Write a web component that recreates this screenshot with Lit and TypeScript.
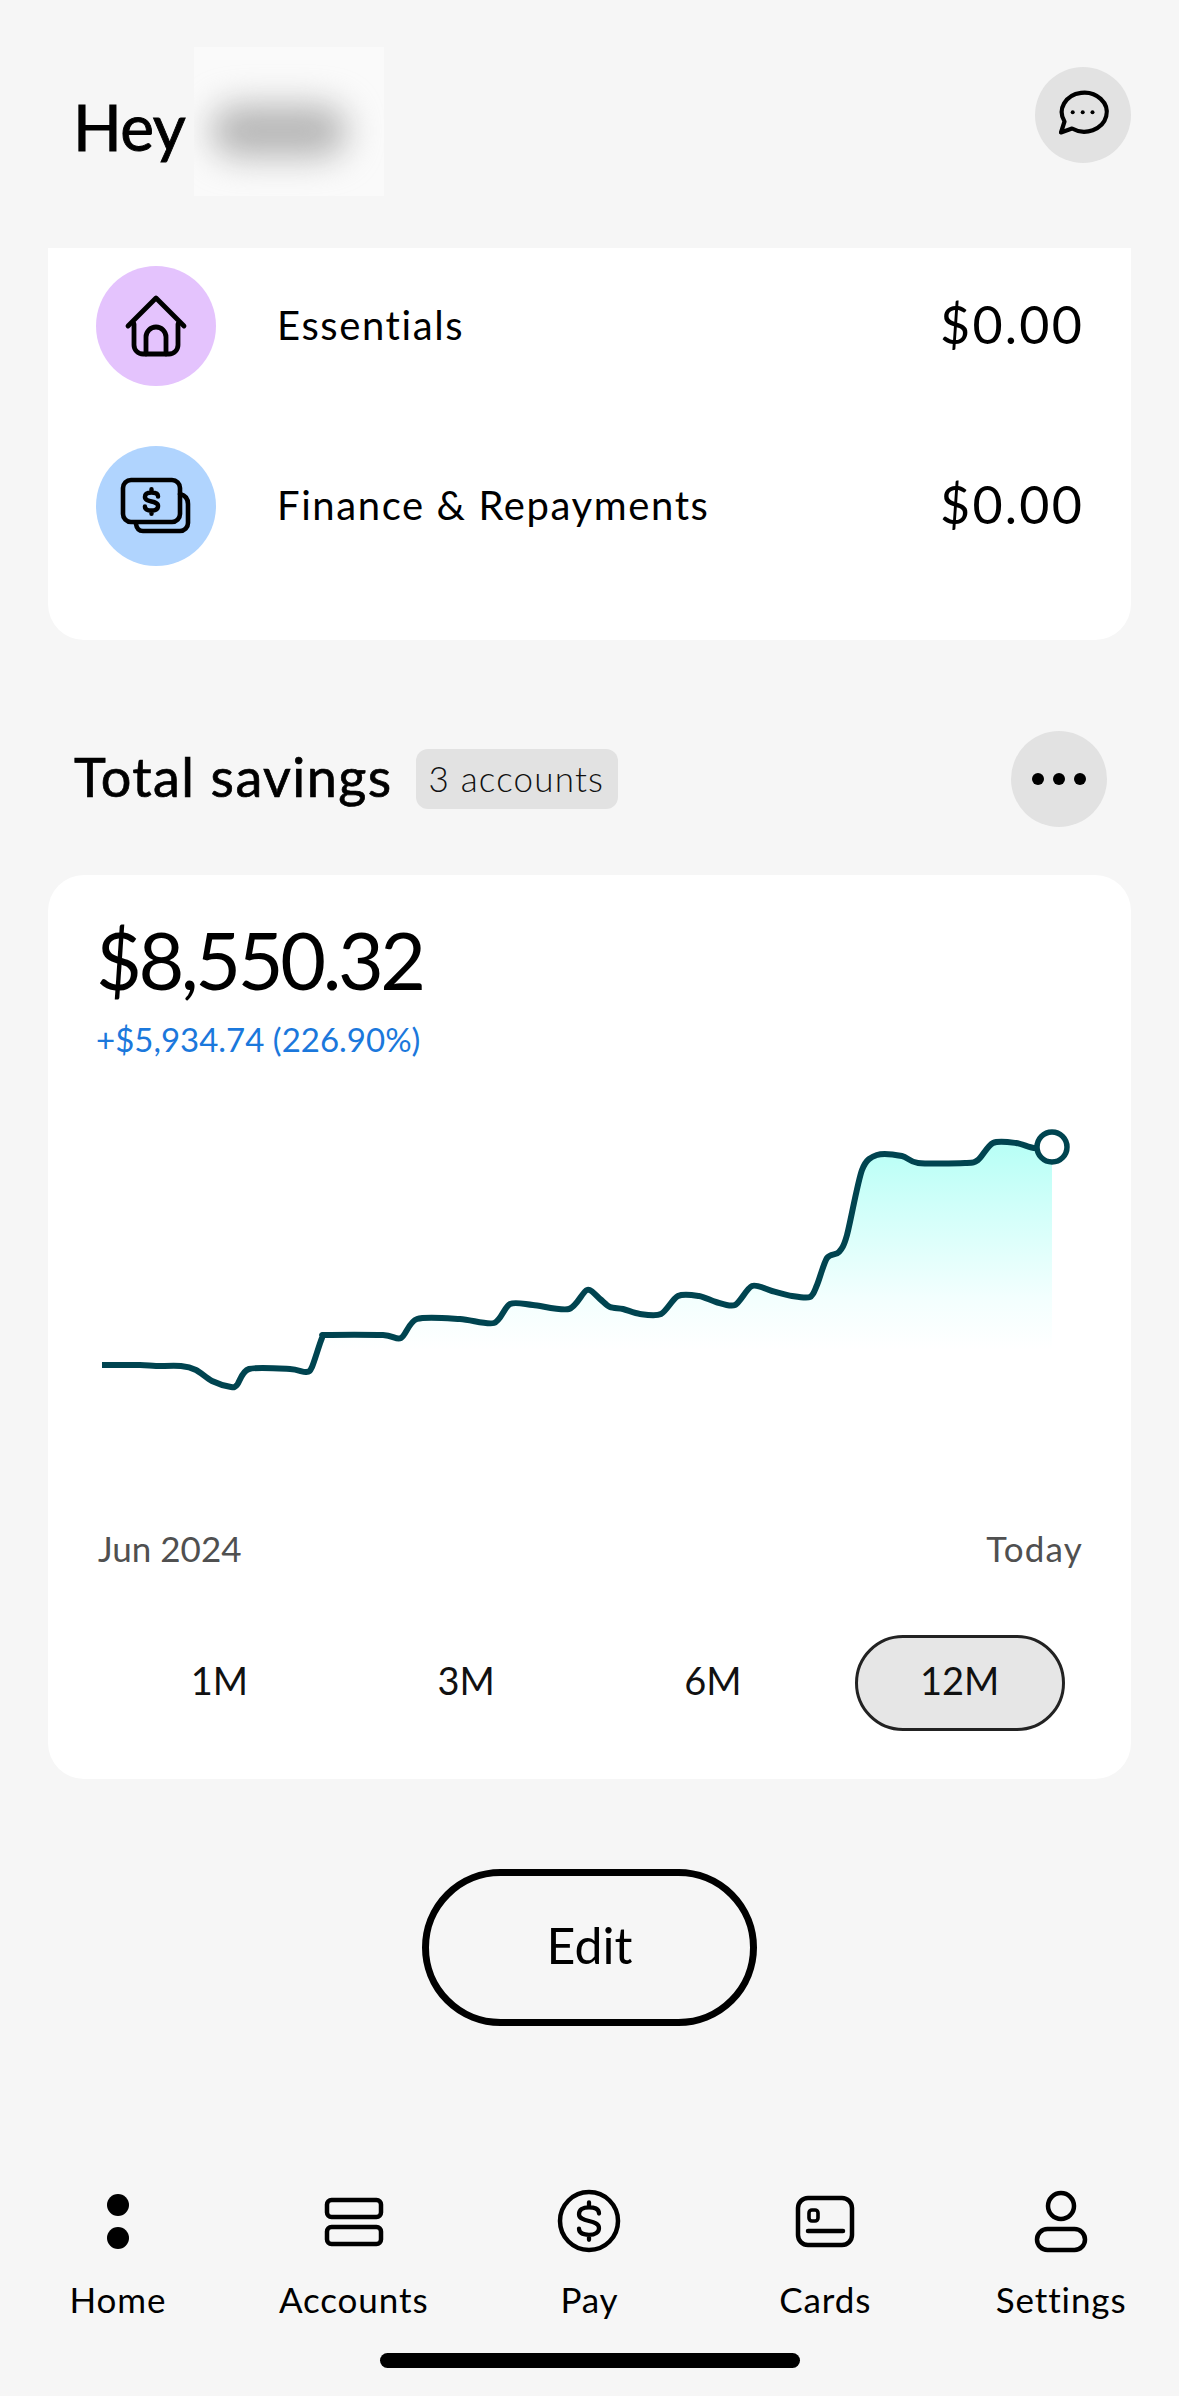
import { LitElement, html, css, svg } from "lit";
import { customElement } from "lit/decorators.js";

const PTS: [number, number][] = [
  [102,1365],[140,1365],[156,1366],[181,1366],[196,1370],[212,1381],[231,1387],[237,1385],[249,1369],[290,1369],[306,1372],[312,1367],[322,1338],[327,1335],[383,1335],[401,1338],[417,1319],[460,1319],[494,1323],[510,1304],[533,1305],[569,1309],[587,1290],[600,1299],[610,1307],[623,1309],[640,1314],[661,1314],[678,1296],[699,1296],[716,1302],[735,1305],[752,1286],[772,1291],[792,1296],[810,1297],[817,1285],[827,1258],[839,1252],[847,1235],[862,1170],[877,1155],[902,1156],[918,1163],[965,1163],[978,1160],[993,1143],[1016,1143],[1034,1148],[1052,1147],
];

function smooth(p: [number, number][]): string {
  let d = `M${p[0][0]} ${p[0][1]}`;
  for (let i = 0; i < p.length - 1; i++) {
    const a = p[Math.max(0, i - 1)], b = p[i], c = p[i + 1], e = p[Math.min(p.length - 1, i + 2)];
    const k = 0.14;
    d += ` C${(b[0] + (c[0] - a[0]) * k).toFixed(1)} ${(b[1] + (c[1] - a[1]) * k).toFixed(1)} ${(c[0] - (e[0] - b[0]) * k).toFixed(1)} ${(c[1] - (e[1] - b[1]) * k).toFixed(1)} ${c[0]} ${c[1]}`;
  }
  return d;
}
const LINE = smooth(PTS);
const AREA = `${LINE} L1052 1400 L102 1400 Z`;

const DOLLAR = "M8 -6 C8 -10 4 -11 0 -11 C-5 -11 -8 -9 -8 -5.5 C-8 -2 -4 -1 0 0 C4 1 8 2 8 5.5 C8 9 5 11 0 11 C-4 11 -8 10 -8 6 M0 -11 V-15 M0 11 V15";

const NAV = [
  { label: "Home", icon: svg`<circle cx="40" cy="21" r="11" fill="#000" stroke="none"/><circle cx="40" cy="54" r="11" fill="#000" stroke="none"/>` },
  { label: "Accounts", icon: svg`<rect x="13" y="16" width="54" height="17" rx="4.5"/><rect x="13" y="43" width="54" height="17" rx="4.5"/>` },
  { label: "Pay", icon: svg`<circle cx="40" cy="37" r="29"/><g transform="translate(40 37) scale(1.25)"><path d=${DOLLAR} stroke-width="3.4"/></g>` },
  { label: "Cards", icon: svg`<rect x="13" y="14" width="54" height="47" rx="10"/><rect x="24" y="26" width="9" height="11" rx="3" stroke-width="3.6"/><path d="M23 47 H58"/>` },
  { label: "Settings", icon: svg`<circle cx="40" cy="22" r="13"/><rect x="16" y="45" width="48" height="21" rx="10.5"/>` },
];

@customElement("app-root")
export class AppRoot extends LitElement {
  static styles = css`
    :host {
      display: block;
      width: 1179px;
      height: 2396px;
      overflow: hidden;
      background: #f6f6f6;
      color: #000;
      font-family: "Lato", "Noto Sans", sans-serif;
    }
    .header {
      height: 248px;
      box-sizing: border-box;
      padding: 47px 48px 0 73px;
      display: flex;
      justify-content: space-between;
      align-items: flex-start;
    }
    .greet { display: flex; align-items: center; height: 149px; gap: 9px; }
    .hey { font-size: 64px; line-height: 1; padding-top: 10px; letter-spacing: -0.5px; -webkit-text-stroke: 0.9px #000; }
    .mask {
      width: 190px;
      height: 149px;
      background: #fafafa;
      overflow: hidden;
      display: flex;
      align-items: center;
      justify-content: center;
    }
    .smudge {
      width: 136px;
      height: 52px;
      margin: 18px 20px 0 0;
      border-radius: 26px;
      background: #b6b6b6;
      filter: blur(17px);
    }
    .round {
      width: 96px;
      height: 96px;
      border-radius: 50%;
      background: #e2e2e2;
      display: flex;
      align-items: center;
      justify-content: center;
      flex: none;
    }
    .chat { margin-top: 20px; }
    svg { display: block; fill: none; stroke: #000; stroke-linecap: round; stroke-linejoin: round; }
    .card { margin: 0 48px; background: #fff; border-radius: 36px; box-sizing: border-box; }
    .budget {
      height: 392px;
      border-radius: 0 0 36px 36px;
      padding: 18px 47px 0 48px;
      display: flex;
      flex-direction: column;
      gap: 60px;
    }
    .row { display: flex; align-items: center; height: 120px; }
    .disc { width: 120px; height: 120px; border-radius: 50%; flex: none; }
    .purple { background: #e4c3fd; }
    .blue { background: #b0d4fe; }
    .name { margin-left: 61px; flex: 1; font-size: 40px; line-height: 44px; letter-spacing: 1.6px; padding-bottom: 3px; }
    .sum { font-size: 52px; line-height: 60px; letter-spacing: 2.2px; padding-bottom: 4px; }
    .section {
      margin-top: 91px;
      height: 96px;
      padding: 0 72px 0 74px;
      display: flex;
      align-items: center;
    }
    .title { font-size: 54px; line-height: 60px; letter-spacing: 1.4px; padding-bottom: 5px; -webkit-text-stroke: 0.7px #000; }
    .badge {
      margin-left: 24px;
      height: 60px;
      padding: 0 14px 0 12px;
      border-radius: 12px;
      background: #e2e2e2;
      display: flex;
      align-items: center;
      font-size: 35px;
      letter-spacing: 1.2px;
      color: #111;
      font-family: "Lato Light", "Lato", sans-serif;
    }
    .badge span { padding-bottom: 3px; }
    .grow { flex: 1; }
    .dots { gap: 9px; }
    .dots i { width: 12px; height: 12px; border-radius: 50%; background: #000; display: block; }
    .savings {
      margin-top: 48px;
      height: 904px;
      padding: 41px 48px 0 50px;
      display: flex;
      flex-direction: column;
    }
    .amount { font-size: 79px; line-height: 88px; letter-spacing: -3.4px; margin-left: -2px; }
    .delta { font-size: 33px; line-height: 40px; margin-top: 15px; margin-bottom: 1px; color: #1b78dc; margin-left: -2px; }
    .chart { margin: 0 -48px 0 -50px; flex: none; }
    .axis {
      display: flex;
      justify-content: space-between;
      margin-top: 27px;
      font-size: 35px;
      line-height: 42px;
      color: #505050;
    }
    .axis span:last-child { letter-spacing: 1.2px; }
    .tabs {
      display: grid;
      grid-template-columns: repeat(4, 1fr);
      margin: 66px 0 0 -2px;
    }
    .tab {
      height: 96px;
      width: 210px;
      justify-self: center;
      box-sizing: border-box;
      border-radius: 48px;
      display: flex;
      align-items: center;
      justify-content: center;
      font-size: 38px;
      padding-bottom: 7px;
      color: #111;
    }
    .tab.on { background: #e6e6e6; border: 3px solid #222; }
    .edit {
      display: flex;
      align-items: center;
      justify-content: center;
      margin: 90px auto 0;
      width: 335px;
      height: 157px;
      box-sizing: border-box;
      border: 7px solid #000;
      border-radius: 79px;
      font-size: 50px;
      padding-bottom: 6px;
    }
    .nav {
      margin-top: 158px;
      display: grid;
      grid-template-columns: repeat(5, 1fr);
    }
    .item { display: flex; flex-direction: column; align-items: center; }
    .item span { font-size: 35px; line-height: 42px; margin-top: 22px; letter-spacing: 0.9px; }
    .indicator {
      margin: 33px auto 0;
      width: 420px;
      height: 15px;
      border-radius: 8px;
      background: #000;
    }
  `;

  render() {
    return html`
      <div class="header">
        <div class="greet">
          <div class="hey">Hey</div>
          <div class="mask"><div class="smudge"></div></div>
        </div>
        <div class="round chat">
          <svg width="96" height="96" viewBox="0 0 96 96" stroke-width="4.2">
            <path d="M37 61.5 A22.5 19.5 0 1 0 29.5 54.5 L26 65.5 Z" />
            <circle cx="37.7" cy="45.3" r="2" fill="#000" stroke="none" />
            <circle cx="47.7" cy="45.3" r="2" fill="#000" stroke="none" />
            <circle cx="57.5" cy="45.3" r="2" fill="#000" stroke="none" />
          </svg>
        </div>
      </div>

      <div class="card budget">
        <div class="row">
          <div class="disc purple">
            <svg width="120" height="120" viewBox="0 0 120 120" stroke-width="4.8">
              <path d="M32 60 L60 32 L88 60" />
              <path d="M38 58 V79 A9 9 0 0 0 47 88 H73 A9 9 0 0 0 82 79 V58" />
              <path d="M50 88 V71 A10 10 0 0 1 70 71 V88" />
            </svg>
          </div>
          <div class="name">Essentials</div>
          <div class="sum">$0.00</div>
        </div>
        <div class="row">
          <div class="disc blue">
            <svg width="120" height="120" viewBox="0 0 120 120" stroke-width="4.6">
              <rect x="27" y="34" width="57" height="42" rx="8" />
              <path d="M84 48 Q92 50 92 58 V77 A8 8 0 0 1 84 85 H47 Q41 85 40 78" />
              <g transform="translate(55.5 55.5) scale(0.82)"><path d=${DOLLAR} stroke-width="5.4" /></g>
            </svg>
          </div>
          <div class="name">Finance &amp; Repayments</div>
          <div class="sum">$0.00</div>
        </div>
      </div>

      <div class="section">
        <div class="title">Total savings</div>
        <div class="badge"><span>3 accounts</span></div>
        <div class="grow"></div>
        <div class="round dots"><i></i><i></i><i></i></div>
      </div>

      <div class="card savings">
        <div class="amount">$8,550.32</div>
        <div class="delta">+$5,934.74 (226.90%)</div>
        <svg class="chart" width="1083" height="440" viewBox="48 1060 1083 440">
          <defs>
            <linearGradient id="g" gradientUnits="userSpaceOnUse" x1="0" y1="1145" x2="0" y2="1350">
              <stop offset="0" stop-color="#b8fff6" />
              <stop offset="0.45" stop-color="#dcfffb" />
              <stop offset="0.75" stop-color="#f3fffe" />
              <stop offset="1" stop-color="#ffffff" />
            </linearGradient>
          </defs>
          <path d=${AREA} fill="url(#g)" stroke="none" />
          <path d=${LINE} stroke="#004450" stroke-width="6" stroke-linecap="butt" />
          <circle cx="1052" cy="1147" r="15" fill="#fff" stroke="#004450" stroke-width="5.5" />
        </svg>
        <div class="axis"><span>Jun 2024</span><span>Today</span></div>
        <div class="tabs">
          <div class="tab">1M</div>
          <div class="tab">3M</div>
          <div class="tab">6M</div>
          <div class="tab on">12M</div>
        </div>
      </div>

      <div class="edit">Edit</div>

      <div class="nav">
        ${NAV.map(
          (n) => html`
            <div class="item">
              <svg width="80" height="72" viewBox="0 0 80 72" stroke-width="4.5">${n.icon}</svg>
              <span>${n.label}</span>
            </div>
          `
        )}
      </div>
      <div class="indicator"></div>
    `;
  }
}
